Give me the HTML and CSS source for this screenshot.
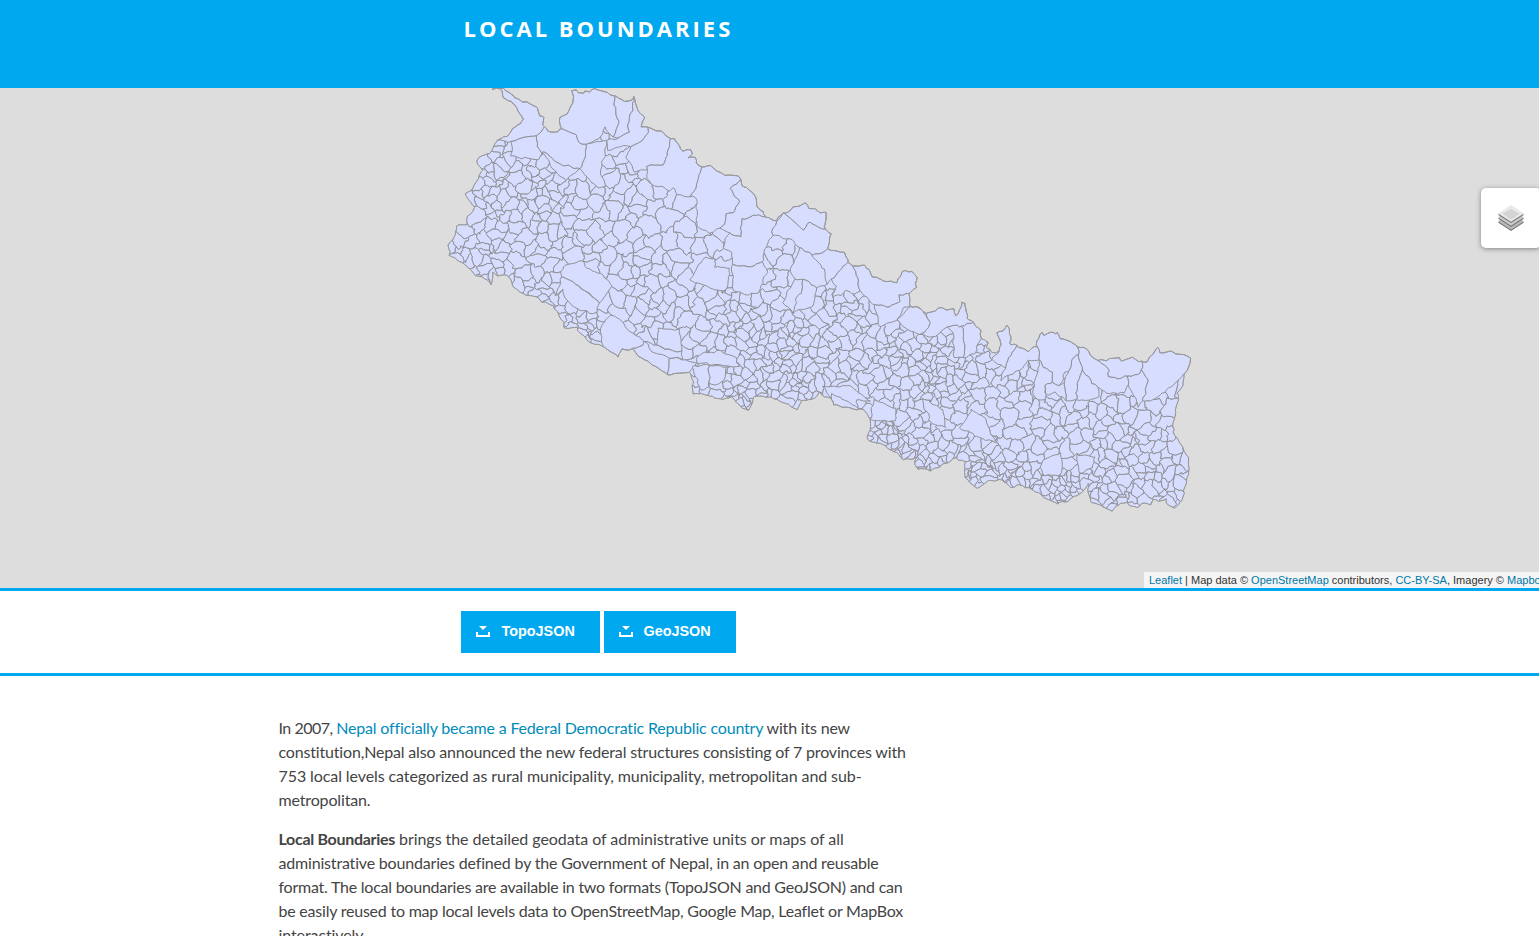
FILE: index.html
```html
<!DOCTYPE html>
<html lang="en">
<head>
<meta charset="utf-8">
<title>Local Boundaries</title>
<link rel="stylesheet" href="styles.css">
</head>
<body>
<header class="site-header"><h1 class="site-title">LOCAL BOUNDARIES</h1></header>
<section class="map">
  <svg class="map-canvas" viewBox="0 88 1539 500" width="1539" height="500">
    <defs><clipPath id="country"><path id="country-clip"/></clipPath></defs>
    <path id="country-fill" class="unit"/>
    <g id="units" clip-path="url(#country)"></g>
    <path id="country-edge" class="edge"/>
  </svg>
  <div class="layers-control">
    <svg width="26" height="26" viewBox="0 0 26 26">
      <path d="M0 17.5 13 9l13 8.5L13 26z" fill="#747474"/><path d="M0 16.3 13 8l13 8.3-13 8.5z" fill="#b9b9b9"/>
      <path d="M0 13.5 13 5l13 8.500L13 22z" fill="#747474"/><path d="M0 12.300 13 4l13 8.300-13 8.500z" fill="#cbcbcb"/>
      <path d="M0 9.700 13 1l13 8.700L13 18z" fill="#747474"/><path d="M0 8.500 13 0l13 8.500-13 8.300z" fill="#e9e9e9"/>
      <path d="M4.500 8.800 13 4l8.500 4.800-8.500 6z" fill="#d4d4d4"/>
    </svg>
  </div>
  <div class="attribution"><a>Leaflet</a> | Map data © <a>OpenStreetMap</a> contributors, <a>CC-BY-SA</a>, Imagery © <a>Mapbox</a></div>
</section>
<section class="downloads">
  <a class="button topo"><svg width="14" height="12" viewBox="0 0 14 12"><path d="M3 1h8L7 5zM0 7h2v3h10V7h2v5H0z" fill="#fff"/></svg>TopoJSON</a>
  <a class="button geo"><svg width="14" height="12" viewBox="0 0 14 12"><path d="M3 1h8L7 5zM0 7h2v3h10V7h2v5H0z" fill="#fff"/></svg>GeoJSON</a>
</section>
<main class="content">
  <p><span class="line l1"><span class="lead">In 2007, </span><a>Nepal officially became a Federal Democratic Republic country</a> with its new</span>
  <span class="line l2">constitution,Nepal also announced the new federal structures consisting of 7 provinces with</span>
  <span class="line l3">753 local levels categorized as rural municipality, municipality, metropolitan and sub-</span>
  <span class="line l4">metropolitan.</span></p>
  <p><span class="line l5"><b>Local Boundaries</b> brings the detailed geodata of administrative units or maps of all</span>
  <span class="line l6">administrative boundaries defined by the Government of Nepal, in an open and reusable</span>
  <span class="line l7">format. The local boundaries are available in two formats (TopoJSON and GeoJSON) and can</span>
  <span class="line l8">be easily reused to map local levels data to OpenStreetMap, Google Map, Leaflet or MapBox</span>
  <span class="line l9">interactively.</span></p>
</main>
<script src="map.js"></script>
</body>
</html>
```
FILE: styles.css
```css
html, body { margin: 0; height: 936px; overflow: hidden; background: #fff; }
body { font-family: Lato, "Open Sans", sans-serif; font-size: 16px; line-height: 24px; color: #444; }
.site-header { box-sizing: border-box; height: 88px; padding: 13px 0 0 463.5px; background: #00a8f0; }
.site-title { margin: 0; font: bold 22px/30px "Open Sans", sans-serif; letter-spacing: 3px; color: #fff; white-space: nowrap; }
.map { position: relative; height: 500px; background: #ddd; overflow: hidden; border-bottom: 3px solid #00a8f0; }
.map-canvas { display: block; }
.unit { fill: #d7ddff; stroke: #919196; stroke-width: 1; stroke-linejoin: round; }
.edge { fill: none; stroke: #999; stroke-width: 1; stroke-linejoin: round; }
.layers-control { position: absolute; left: 1481px; top: 100px; width: 60px; height: 60px; display: flex; align-items: center; justify-content: center; background: #fff; border-radius: 5px; box-shadow: 0 1px 5px rgba(0,0,0,.4); }
.attribution { position: absolute; left: 1144px; bottom: 0; right: 0; height: 16px; padding-left: 5px; background: rgba(255,255,255,.7); font: 11px/16px "Liberation Sans", Arial, sans-serif; color: #333; white-space: nowrap; overflow: hidden; }
.attribution a { color: #0078a8; }
.downloads { display: flex; gap: 4px; height: 42px; padding: 20px 0 20px 461px; border-bottom: 3px solid #00a8f0; }
.button { box-sizing: border-box; display: flex; gap: 11.5px; padding: 0 0 2px 15px; align-items: center; background: #00a8f0; color: #fff; font: bold 14.4px/20px "Liberation Sans", Arial, sans-serif; }
.button svg { flex: none; }
.topo { width: 139px; }
.geo { width: 132px; gap: 10.5px; }
.content { padding: 40px 0 0 278.5px; }
.content p { margin: 0 0 15px; }
.content a { color: #008cba; }
.line { display: block; width: max-content; white-space: nowrap; }
.l1 { letter-spacing: -.18px; }
.lead { letter-spacing: -.5px; }
.l2 { letter-spacing: -.17px; }
.l3 { letter-spacing: -.09px; }
.l4 { letter-spacing: -.15px; }
.l5 { letter-spacing: -.05px; }
.l5 b { letter-spacing: -.3px; }
.l6 { letter-spacing: -.18px; }
.l7 { letter-spacing: -.24px; }
.l8 { letter-spacing: -.22px; }
.l9 { letter-spacing: -.1px; }
```
FILE: map.js
```js
const outline = "493,90 497,86 503,88 517,99 528,103 538,108 539,115 543,118 544,127 549,131 557,132 561,128 559,118 567,114 573,103 572,90 576,90 578,93 583,94 585,90 590,92 594,88 607,93 614,96 625,101 629,100 634,97 636,105 637,109 644,118 642,126 648,127 662,132 671,139 674,138 683,151 691,150 693,153 688,157 695,158 696,163 701,167 712,165 714,169 725,175 737,176 741,180 742,186 747,188 756,197 757,207 763,212 765,217 777,221 778,217 783,213 789,212 791,208 805,204 809,208 818,210 820,212 826,213 825,230 831,234 828,249 845,253 848,262 853,266 865,266 873,277 887,282 897,282 903,272 911,271 917,277 916,287 909,294 910,307 916,307 919,308 926,313 935,311 939,308 953,310 956,316 959,312 962,303 965,303 967,318 973,323 980,331 981,338 987,342 987,348 992,353 999,351 1001,345 997,333 1004,330 1007,325 1009,328 1011,345 1017,345 1028,352 1032,348 1037,347 1038,338 1042,332 1045,335 1053,332 1058,333 1060,338 1070,341 1078,347 1087,349 1091,355 1098,361 1113,359 1120,357 1122,362 1132,357 1135,360 1142,362 1147,362 1157,347 1160,352 1173,352 1180,354 1190,357 1190,365 1184,375 1183,385 1178,392 1178,402 1175,413 1173,423 1173,433 1180,443 1183,447 1188,458 1189,468 1185,487 1182,500 1174,509 1167,503 1166,499 1158,501 1153,500 1151,505 1142,503 1137,508 1129,505 1127,502 1118,504 1112,511 1106,508 1103,507 1092,502 1088,492 1088,483 1082,492 1068,501 1057,503 1043,497 1038,492 1028,488 1020,485 1011,487 1002,480 988,481 978,488 965,478 965,462 956,458 943,465 933,470 918,469 915,462 917,457 903,460 897,453 888,448 880,443 870,442 867,437 870,430 871,420 863,410 833,405 832,399 827,398 819,393 815,399 803,400 797,409 783,403 772,397 753,396 753,403 748,411 743,409 735,400 732,397 723,399 712,397 705,394 693,393 693,383 690,372 668,375 637,355 633,349 622,350 618,357 603,346 590,343 580,333 577,327 568,328 564,328 563,322 555,308 553,305 542,302 537,297 526,295 515,288 507,275 498,275 493,272 492,284 482,277 475,275 467,266 450,255 449,245 455,235 457,226 466,225 468,217 472,212 475,207 469,201 466,193 473,190 476,182 480,176 482,170 477,161 482,156 490,153 495,145 498,139 507,137 514,127 520,124 523,119 512,102 504,98 500,88";

const large = [
"503,88 517,99 528,103 538,108 539,115 543,118 544,127 537,136 524,137 512,142 503,141 498,139 507,137 514,127 520,124 523,119 512,102 504,98 500,88",
"512,142 524,137 537,136 537,143 541,152 540,160 522,158 511,156",
"537,136 544,127 549,131 557,132 561,128 572,133 577,135 578,143 586,144 585,160 580,169 563,165 555,161 548,153 541,152 537,143",
"541,152 548,153 555,161 563,165 580,169 572,175 566,180 557,174 551,166 544,155",
"586,144 606,140 606,153 602,161 600,172 606,187 598,188 588,178 583,168 585,160",
"561,128 559,118 567,114 573,103 572,90 576,90 578,93 583,94 585,90 590,92 594,88 607,93 614,96 616,115 619,123 613,137 609,133 604,127 602,129 603,134 599,139 586,142 578,143 577,135 572,133",
"614,96 625,101 629,100 634,97 632,110 629,118 628,133 620,138 612,140 613,137 619,123 616,115",
"634,97 636,105 637,109 644,118 642,126 648,127 648,133 642,140 630,147 622,146 608,150 606,140 620,138 628,133 629,118 632,110",
"648,127 662,132 671,139 668,152 663,165 655,165 647,166 647,170 635,171 630,162 626,158 630,147 642,140 648,133",
"671,139 674,138 683,151 691,150 693,153 688,157 695,158 696,163 701,167 699,178 696,188 690,196 683,196 677,194 672,188 670,192 663,187 654,186 647,178 647,166 655,165 663,165 668,152",
"701,167 712,165 714,169 725,175 737,176 741,180 730,188 735,195 740,202 733,213 726,214 725,225 720,229 708,233 697,227 697,200 690,196 696,188 699,178",
"741,180 742,186 747,188 756,197 757,207 763,212 765,217 759,215 742,219 741,237 730,233 722,228 725,225 726,214 733,213 740,202 735,195 730,188",
"765,217 777,221 773,228 773,235 765,248 762,262 748,267 732,265 732,253 723,248 726,239 730,233 741,237 742,219 759,215",
"778,217 783,213 789,212 791,208 805,204 809,208 818,210 820,212 826,213 825,230 817,227 810,222 804,231 794,222 786,213",
"777,221 786,213 794,222 804,231 810,222 817,227 825,230 831,234 828,249 822,253 812,255 800,247 792,240 773,235 773,228",
"822,253 828,249 845,253 848,262 840,270 831,280 827,284 820,272 811,262 812,255",
"848,262 853,266 858,278 860,292 855,294 847,291 842,295 832,297 836,287 831,280 840,270",
"853,266 865,266 873,277 887,282 897,282 903,272 911,271 917,277 916,287 909,294 900,295 900,302 890,307 875,305 862,293 858,278",
"875,305 890,307 900,302 900,295 909,294 910,307 905,308 897,320 880,327 877,317",
"910,307 916,307 922,310 930,322 926,330 920,335 905,328 897,320",
"926,313 935,311 939,308 953,310 956,316 959,312 962,303 965,303 967,318 973,323 962,326 948,326 935,337 920,337 926,330 930,322",
"962,326 973,323 980,331 981,338 975,353 963,358 965,347 963,333",
"948,326 962,326 963,333 965,347 963,358 954,357 953,333",
"999,351 1001,345 997,333 1004,330 1007,325 1009,328 1011,345 1017,345 1012,353 1005,368 992,360",
"1017,345 1028,352 1032,348 1037,347 1040,360 1028,361 1022,368 1010,375 1000,380 1003,366 1012,353",
"1038,338 1042,332 1045,335 1053,332 1058,333 1060,338 1070,341 1078,347 1079,355 1072,358 1070,368 1065,373 1060,387 1053,382 1052,373 1043,367 1040,360 1037,347",
"1078,347 1087,349 1091,355 1098,361 1108,368 1109,376 1120,379 1128,376 1128,385 1124,393 1107,393 1097,388 1088,378 1082,370 1079,355",
"1079,355 1082,370 1077,387 1077,400 1067,401 1064,383 1070,368 1072,358",
"1082,370 1088,378 1097,388 1100,397 1085,401 1077,398 1077,387",
"1098,361 1113,359 1120,357 1122,362 1132,357 1135,360 1142,362 1142,370 1138,375 1130,375 1120,379 1109,376 1108,368",
"1142,370 1147,378 1147,387 1142,402 1138,407 1136,398 1127,388 1128,376 1138,375",
"1142,362 1147,362 1157,347 1160,352 1173,352 1180,354 1190,357 1190,365 1184,375 1167,390 1153,400 1142,402 1147,387 1147,378 1142,370",
"1053,382 1060,387 1064,383 1067,401 1055,393 1046,395 1046,386",
"1040,360 1043,367 1052,373 1053,382 1046,386 1045,400 1038,400 1033,392 1036,377",
"562,277 573,282 600,302 597,312 590,313 575,308 565,298 563,290 555,297",
"610,315 620,319 629,331 645,341 643,346 633,349 622,350 618,357 603,346 600,332 602,325",
"645,341 670,357 668,375 637,355 633,349 643,347",
"670,358 697,363 690,372 668,375",
"645,340 670,351 682,351 683,359 670,357 653,352",
"702,353 720,351 735,357 739,367 718,365 697,365 697,358",
"658,328 680,330 682,348 670,351 657,345",
"732,267 748,267 762,262 767,272 758,293 747,295 733,290",
"795,280 803,279 802,293 793,312 783,303 787,293",
"803,279 817,287 813,307 793,313 797,297 802,290",
"797,247 812,257 824,270 828,286 817,288 803,279 795,280 790,272",
"703,258 715,258 715,267 730,268 727,290 715,290 690,280 697,268",
"875,400 896,409 895,421 871,420 872,408",
"823,387 852,386 870,402 857,400 858,408 833,396",
"832,393 857,407 863,410 833,405",
"923,398 943,410 946,428 930,422 928,414 923,408",
"972,409 985,418 995,442 980,438 965,430 960,428",
"1043,460 1060,453 1063,465 1060,475 1043,475 1040,468",
"1077,455 1095,457 1092,468 1080,473 1078,465",
"692,366 709,365 709,387 701,391 697,380",
"709,365 727,367 724,380 715,386 709,383",
"560,272 566,265 572,263 583,261 587,268 603,275 613,285 606,296 598,300 585,290 573,281 562,277"
];

// x, y, typical spacing of unit centres
const density = [[480,170,10],[480,200,10],[530,190,10],[550,200,8],[570,190,13],[500,240,14],[480,265,9],[530,255,15],[540,290,9],[580,230,13],[600,250,12],[560,315,10],[590,330,7],[610,180,14],[640,200,15],[680,215,21],[600,285,16],[640,260,14],[700,240,19],[650,290,13],[630,310,14],[660,340,16],[700,300,13],[720,330,11],[740,310,10],[760,340,8.5],[790,330,8.5],[740,380,10],[745,400,5],[780,290,17],[800,390,9],[830,320,12],[830,350,10],[860,340,13],[870,380,12],[850,400,18],[890,350,10],[910,370,10],[930,350,7],[930,378,6],[945,355,10],[960,380,9],[900,400,15],[960,420,19],[930,430,13],[875,430,5.5],[890,440,5.5],[910,450,6.500],[930,462,5],[950,450,9],[980,400,13],[980,470,6.500],[1005,475,6.500],[1010,430,18],[1010,380,10],[1050,410,12],[1030,450,15],[1040,490,6],[1060,495,5.5],[1060,440,16],[1080,440,13],[1100,400,13],[1100,425,11],[1100,485,8],[1120,500,8.500],[1130,440,11],[1140,480,10],[1160,400,15],[1160,430,15],[1165,460,12],[1170,490,9]];

const parse = s => s.split(" ").map(p => p.split(",").map(Number));
const edge = parse(outline);
const known = edge.slice();
const snap = p => {
  let best = p, limit = 3.2;
  for (const k of known) { const d = Math.hypot(k[0]-p[0], k[1]-p[1]); if (d < limit) { limit = d; best = k; } }
  if (best === p) known.push(p);
  return best;
};
const regions = large.map(r => parse(r).map(snap));
const inside = (p, poly) => {
  let hit = false;
  for (let i = 0, j = poly.length - 1; i < poly.length; j = i++) {
    const a = poly[i], b = poly[j];
    if ((a[1] > p[1]) !== (b[1] > p[1]) && p[0] < (b[0]-a[0]) * (p[1]-a[1]) / (b[1]-a[1]) + a[0]) hit = !hit;
  }
  return hit;
};
const noise = (x, y, k) => Math.sin(x*k + 1.7*Math.sin(y*k*.8)) + Math.sin(y*k*1.13 + 1.9*Math.sin(x*k*.71));
const warp = (p, a, b) => [
  p[0] + a*noise(p[0], p[1], .43) + a*.5*noise(p[1]+40, p[0], 1.1) + b*noise(p[0]+13, p[1]+5, .19),
  p[1] + a*noise(p[1]+90, p[0]+11, .47) + a*.5*noise(p[0]+7, p[1], 1.23) + b*noise(p[1]+31, p[0], .17)
];
const toPath = (poly, a, b, step) => {
  let d = "";
  poly.forEach((p, i) => {
    const q = poly[(i+1) % poly.length], n = Math.max(1, Math.round(Math.hypot(q[0]-p[0], q[1]-p[1]) / step));
    for (let t = 0; t < n; t++) {
      const w = warp([p[0]+(q[0]-p[0])*t/n, p[1]+(q[1]-p[1])*t/n], a, b);
      d += (d ? "L" : "M") + w[0].toFixed(1) + " " + w[1].toFixed(1);
    }
  });
  return d + "Z";
};
let state = 20177;
const rand = () => { state = (state * 1664525 + 1013904223) >>> 0; return state / 4294967296; };
const spacing = (x, y) => {
  let sum = 0, total = 0;
  for (const [a, b, r] of density) { const w = 1 / Math.pow((x-a)**2 + (y-b)**2 + 20, 2); sum += w*r; total += w; }
  return sum / total;
};
const seeds = [];
for (let i = 0; i < 26000; i++) {
  const p = [445 + rand()*750, 86 + rand()*430];
  if (!inside(p, edge) || regions.some(r => inside(p, r))) continue;
  const r = spacing(p[0], p[1]) * (.42 + .55*rand()) * (p[0] > 730 ? .88 : 1);
  if (seeds.every(s => Math.hypot(s[0]-p[0], s[1]-p[1]) > Math.max(r, s[2]))) seeds.push([p[0], p[1], r]);
}
const group = document.getElementById("units");
const draw = d => {
  const el = document.createElementNS("http://www.w3.org/2000/svg", "path");
  el.setAttribute("class", "unit");
  el.setAttribute("d", d);
  group.appendChild(el);
};
seeds.forEach(s => {
  let cell = [[s[0]-45,s[1]-45],[s[0]+45,s[1]-45],[s[0]+45,s[1]+45],[s[0]-45,s[1]+45]];
  for (const o of seeds) {
    if (o === s || Math.hypot(o[0]-s[0], o[1]-s[1]) > 110) continue;
    const mx = (s[0]+o[0])/2, my = (s[1]+o[1])/2, nx = o[0]-s[0], ny = o[1]-s[1];
    const side = p => (p[0]-mx)*nx + (p[1]-my)*ny;
    const next = [];
    cell.forEach((p, i) => {
      const q = cell[(i+1) % cell.length], a = side(p), b = side(q);
      if (a <= 0) next.push(p);
      if ((a < 0 && b > 0) || (a > 0 && b < 0)) next.push([p[0]+(q[0]-p[0])*a/(a-b), p[1]+(q[1]-p[1])*a/(a-b)]);
    });
    cell = next;
  }
  draw(toPath(cell, .85, 1.5, 2));
});
regions.forEach(r => draw(toPath(r, .5, 0, 3)));
const border = toPath(edge, .45, 0, 3);
["country-clip", "country-fill", "country-edge"].forEach(id => document.getElementById(id).setAttribute("d", border));
```
